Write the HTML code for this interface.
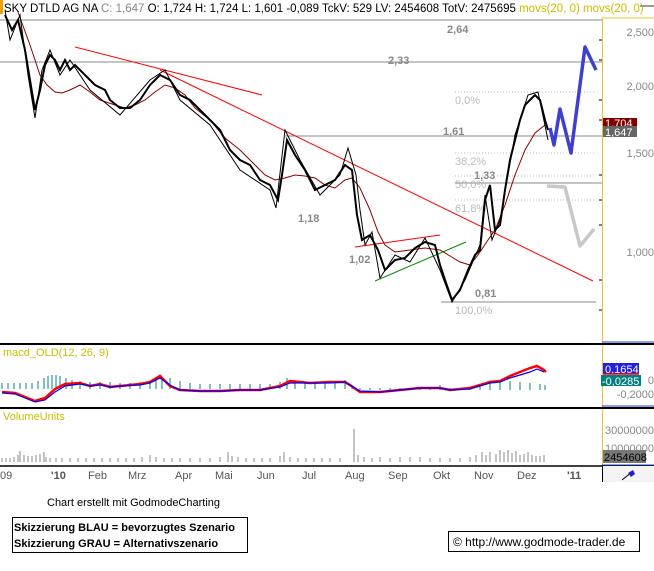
<!DOCTYPE html>
<html><head><meta charset="utf-8"><style>
html,body{margin:0;padding:0;background:#fff;width:654px;height:571px;overflow:hidden}
svg{display:block;font-family:"Liberation Sans",sans-serif}
</style></head><body>
<svg width="654" height="571" viewBox="0 0 654 571" xmlns="http://www.w3.org/2000/svg">
<rect width="654" height="571" fill="#fff"/>
<!-- header -->
<rect x="0" y="0" width="3" height="14" fill="#f0a000"/>
<text x="4" y="12" font-size="11.5"><tspan fill="#000">SKY DTLD AG NA</tspan><tspan fill="#888"> C: 1,647</tspan><tspan fill="#000"> O: 1,724 H: 1,724 L: 1,601 -0,089 TckV: 529 LV: 2454608 TotV: 2475695</tspan><tspan fill="#c8c000"> movs(20, 0) movs(20, 0)</tspan></text>
<rect x="640" y="5" width="14" height="2" fill="#999"/>
<!-- right axis border -->
<line x1="602.5" y1="18" x2="602.5" y2="466" stroke="#e8c030" stroke-width="1"/>
<line x1="602" y1="18" x2="654" y2="18" stroke="#e8c030"/>
<!-- horizontal levels -->
<line x1="0" y1="20" x2="602" y2="20" stroke="#888" stroke-width="1"/>
<line x1="0" y1="62" x2="602" y2="62" stroke="#888" stroke-width="1"/>
<text x="447" y="33" font-size="11" font-weight="bold" fill="#888">2,64</text>
<text x="388" y="64" font-size="11" font-weight="bold" fill="#888">2,33</text>
<line x1="285" y1="136" x2="602" y2="136" stroke="#888"/>
<text x="443" y="135" font-size="11" font-weight="bold" fill="#888">1,61</text>
<line x1="455" y1="183" x2="602" y2="183" stroke="#888"/>
<text x="474" y="179" font-size="11" font-weight="bold" fill="#888">1,33</text>
<line x1="441" y1="302" x2="596" y2="302" stroke="#888"/>
<text x="475" y="297" font-size="11" font-weight="bold" fill="#888">0,81</text>
<text x="298" y="222" font-size="11" font-weight="bold" fill="#888">1,18</text>
<text x="349" y="263" font-size="11" font-weight="bold" fill="#888">1,02</text>
<g stroke="#bbb" stroke-dasharray="1,2">
<line x1="455" y1="92" x2="595" y2="92"/><line x1="455" y1="153" x2="595" y2="153"/>
<line x1="455" y1="176" x2="595" y2="176"/><line x1="455" y1="200" x2="595" y2="200"/>
</g>
<g font-size="11" fill="#bbb">
<text x="455" y="104">0,0%</text><text x="455" y="165">38,2%</text><text x="455" y="188">50,0%</text>
<text x="455" y="212">61,8%</text><text x="455" y="314">100,0%</text></g>
<!-- trend lines -->
<g stroke="#f00" stroke-width="1" fill="none">
<line x1="75" y1="47" x2="262" y2="95"/>
<line x1="160" y1="70" x2="593" y2="281"/>
<line x1="355" y1="247" x2="440" y2="235"/>
</g>
<line x1="375" y1="281" x2="466" y2="242" stroke="#080" stroke-width="1"/>
<!-- MA -->
<polyline fill="none" stroke="#8b0000" stroke-width="1" points="18,12 30,45 40,75 47,85 55,92 62,93 70,90 80,85 90,92 100,100 115,105 125,108 135,105 145,100 155,92 165,85 175,88 185,95 195,108 210,120 225,138 240,150 255,165 265,175 275,180 285,178 295,175 305,176 315,178 325,185 335,188 345,180 352,178 360,188 370,210 378,232 385,245 395,252 410,250 425,248 440,250 450,256 460,262 470,265 478,255 488,240 495,230 505,205 515,175 525,150 535,133 545,125"/>
<!-- price -->
<polyline fill="none" stroke="#000" stroke-width="2" points="5,15 12,30 18,20 25,50 30,80 35,110 40,90 45,65 50,55 55,60 60,70 65,60 70,70 75,65 85,75 95,85 105,90 110,100 120,108 130,108 140,100 150,85 160,75 170,80 180,95 190,100 200,110 210,120 220,130 230,150 240,160 250,165 260,180 270,185 278,200 282,175 287,140 295,155 305,170 315,190 325,185 335,180 345,165 352,170 357,215 362,240 370,235 378,250 385,270 395,260 405,258 415,248 425,242 435,245 440,265 445,280 452,300 460,290 468,270 475,255 480,250 485,200 490,185 495,230 500,225 505,190 510,160 515,140 520,120 525,105 530,100 535,95 540,100 545,120 548,130"/>
<polyline fill="none" stroke="#000" stroke-width="1" points="5,10 10,40 20,15 28,75 35,118 42,70 50,50 60,75 70,60 90,90 120,115 150,80 165,70 180,100 210,125 240,170 270,190 276,208 285,130 300,160 320,195 340,175 348,148 356,175 360,210 365,245 372,232 380,278 395,255 410,262 425,238 440,270 452,302 465,280 480,245 485,195 492,240 500,220 515,135 528,95 538,92 548,140"/>
<!-- scenarios -->
<polyline fill="none" stroke="#4040d0" stroke-width="3.5" stroke-linejoin="round" points="550,128 554,145 560,109 571,153 585,47 596,70"/>
<polyline fill="none" stroke="#c8c8c8" stroke-width="3.5" stroke-linejoin="round" points="547,186 565,187 580,246 594,229"/>
<!-- right axis price -->
<g font-size="11" fill="#888" text-anchor="end"><text x="654" y="36">2,500</text><text x="654" y="90">2,000</text><text x="654" y="157">1,500</text><text x="654" y="256">1,000</text></g>
<rect x="603" y="118" width="34" height="10" fill="#800000"/><text x="605" y="127" font-size="11" fill="#fff">1,704</text>
<rect x="603" y="126" width="34" height="11" fill="#666"/><text x="605" y="136" font-size="11" fill="#fff">1,647</text>
<g stroke="#000"><line x1="599" y1="40" x2="602" y2="40"/><line x1="599" y1="60" x2="602" y2="60"/><line x1="599" y1="100" x2="602" y2="100"/><line x1="599" y1="120" x2="602" y2="120"/><line x1="599" y1="175" x2="602" y2="175"/><line x1="599" y1="200" x2="602" y2="200"/><line x1="599" y1="225" x2="602" y2="225"/><line x1="599" y1="280" x2="602" y2="280"/><line x1="599" y1="310" x2="602" y2="310"/></g>
<line x1="0" y1="344" x2="654" y2="344" stroke="#000" stroke-width="2"/>
<line x1="602" y1="342" x2="654" y2="342" stroke="#2040c0"/>
<!-- MACD -->
<text x="3" y="356" font-size="11" fill="#c8c000">macd_OLD(12, 26, 9)</text>
<g stroke="#008080" stroke-width="1">
<path d="M2 383V389M8 383V389M14 383V389M20 383V389M26 383V389M32 383V389M38 381V389M44 378V389M48 376V389M52 375V389M56 375V389M60 376V389M66 378V389M72 380V389M80 381V389M90 382V389M100 382V389M110 382V389M120 383V389M130 383V389M140 382V389M150 382V389M156 379V389M162 377V389M170 378V389M180 381V389M190 383V389M200 384V389M210 384V389M220 384V389M230 384V389M240 384V389M250 384V389M260 384V389M270 384V389M280 382V389M287 378V389M295 380V389M305 383V389M315 384V389M325 383V389M335 381V389M345 380V389M352 385V389M360 388V390M370 388V390M380 388V390M390 388V390M400 388V390M410 388V390M420 388V390M430 387V390M440 385V390M450 388V390M460 388V390M470 388V390M480 385V390M490 383V390M500 381V390M510 381V390M520 382V390M530 383V390M540 384V390M545 385V390"/>
</g>
<polyline fill="none" stroke="#f00" stroke-width="2.5" points="2,392 15,393 25,397 35,401 45,398 55,389 65,384 80,383 90,386 100,384 110,387 120,386 140,384 150,382 160,376 170,386 180,390 200,391 220,391 240,390 260,390 280,386 290,381 310,383 330,382 345,382 350,385 360,392 380,392 400,390 420,388 440,388 450,390 470,388 480,385 490,382 500,381 510,376 520,372 530,368 537,366 544,370 546,372"/>
<polyline fill="none" stroke="#00f" stroke-width="1.2" points="2,393 15,394 25,398 35,402 45,400 55,392 65,386 80,384 90,386 100,385 110,387 120,386 140,385 150,383 160,378 170,385 180,390 200,391 220,391 240,390 260,390 280,387 290,383 310,383 330,383 345,382 350,385 360,391 380,392 400,390 420,388 440,388 450,390 470,389 480,386 490,383 500,382 510,378 520,375 530,372 537,369 544,372"/>
<rect x="603" y="363" width="36" height="11" fill="#2020e0"/><text x="605" y="373" font-size="11" fill="#fff">0,1654</text>
<line x1="603" y1="374" x2="639" y2="374" stroke="#f00" stroke-width="1.5"/>
<rect x="601" y="375" width="40" height="11" fill="#008080"/><text x="602" y="385" font-size="11" fill="#fff">-0,0285</text>
<text x="654" y="384" font-size="11" fill="#888" text-anchor="end">0</text>
<text x="654" y="398" font-size="11" fill="#888" text-anchor="end">-0,2000</text>
<line x1="0" y1="408" x2="654" y2="408" stroke="#000" stroke-width="2"/>
<line x1="602" y1="406" x2="654" y2="406" stroke="#2040c0"/>
<!-- Volume -->
<text x="3" y="420" font-size="11" fill="#c8c000">VolumeUnits</text>
<g stroke="#888" stroke-width="1">
<path d="M2 462V458M6 462V458M10 462V458M14 462V457M18 462V455M20 462V451M24 462V455M28 462V456M32 462V456M36 462V455M40 462V454M44 462V452M46 462V457M50 462V458M56 462V458M62 462V458M70 462V458M78 462V458M86 462V458M94 462V458M102 462V458M110 462V458M118 462V458M126 462V458M134 462V458M142 462V457M150 462V455M156 462V457M164 462V458M172 462V458M180 462V458M190 462V458M200 462V458M210 462V458M220 462V457M228 462V452M232 462V456M238 462V457M246 462V458M254 462V458M262 462V458M270 462V458M280 462V456M284 462V452M290 462V457M298 462V458M306 462V458M314 462V458M322 462V458M330 462V458M340 462V458M354 462V429M358 462V455M364 462V457M372 462V458M380 462V457M390 462V458M400 462V457M410 462V457M420 462V457M430 462V458M440 462V458M450 462V458M460 462V458M470 462V457M476 462V455M482 462V452M486 462V455M490 462V452M496 462V454M500 462V450M504 462V452M508 462V450M512 462V453M516 462V451M520 462V455M524 462V454M528 462V452M532 462V455M536 462V456M540 462V456M544 462V455"/>
</g>
<text x="654" y="434" font-size="11" fill="#888" text-anchor="end">30000000</text>
<text x="654" y="452" font-size="11" fill="#888" text-anchor="end">10000000</text>
<rect x="603" y="450" width="43" height="13" fill="#777"/><text x="604" y="461" font-size="11" fill="#000">2454608</text>
<line x1="0" y1="466" x2="654" y2="466" stroke="#000" stroke-width="1.5"/>
<line x1="602" y1="465" x2="654" y2="465" stroke="#2040c0"/>
<!-- date axis -->
<rect x="602" y="466" width="52" height="16" fill="#f4f4f4"/>
<line x1="602.5" y1="466" x2="602.5" y2="482" stroke="#000"/>
<path d="M622 480L632 472" stroke="#000"/><path d="M628 473l5-3 2 4-4 3z" fill="#22c"/>
<g font-size="11" fill="#555"><text x="0" y="479">09</text><text x="51" y="479" font-weight="bold">'10</text><text x="88" y="479">Feb</text><text x="128" y="479">Mrz</text><text x="175" y="479">Apr</text><text x="215" y="479">Mai</text><text x="257" y="479">Jun</text><text x="302" y="479">Jul</text><text x="345" y="479">Aug</text><text x="388" y="479">Sep</text><text x="433" y="479">Okt</text><text x="474" y="479">Nov</text><text x="517" y="479">Dez</text><text x="567" y="479" font-weight="bold">'11</text></g>
<text x="47" y="506" font-size="11" fill="#000">Chart erstellt mit GodmodeCharting</text>
<rect x="12.5" y="517.5" width="235" height="35" fill="none" stroke="#000"/>
<text x="14" y="531" font-size="11" font-weight="bold">Skizzierung BLAU = bevorzugtes Szenario</text>
<text x="14" y="547" font-size="11" font-weight="bold">Skizzierung GRAU = Alternativszenario</text>
<rect x="448.5" y="531.5" width="191" height="20" fill="none" stroke="#000"/>
<text x="453" y="546" font-size="12">© http://www.godmode-trader.de</text>
</svg>
</body></html>
